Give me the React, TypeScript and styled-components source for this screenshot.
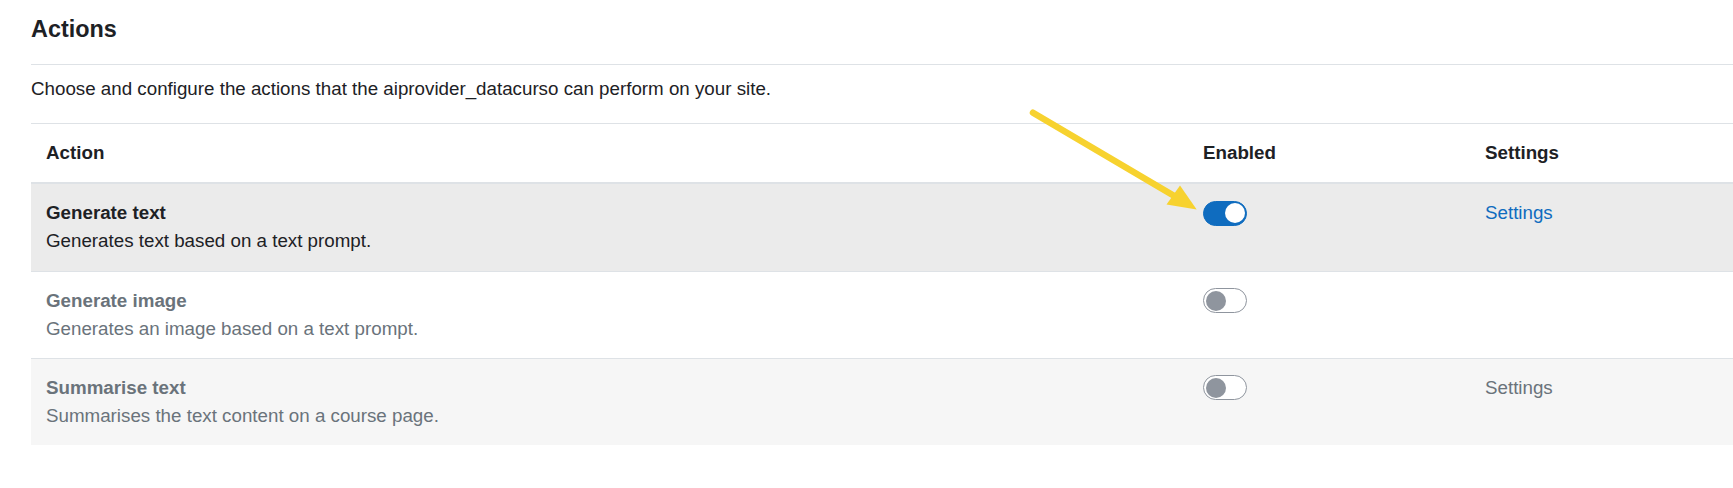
import React from "react";
import styled, { createGlobalStyle } from "styled-components";

const GlobalStyle = createGlobalStyle`
  html, body {
    margin: 0;
    padding: 0;
    background: #ffffff;
  }
  body {
    font-family: "Liberation Sans", Arial, sans-serif;
    font-size: 18.75px;
    line-height: 28.125px;
    color: #1d2125;
    overflow: hidden;
  }
`;

const Page = styled.div`
  position: relative;
  width: 1733px;
  height: 488px;
  padding-left: 31px;
  box-sizing: border-box;
  overflow: hidden;
`;

const Title = styled.h4`
  margin: 0;
  padding: 15px 0 21px;
  font-size: 23.4px;
  line-height: 28px;
  font-weight: 700;
  color: #1d2125;
  border-bottom: 1px solid #dee2e6;
`;

const Description = styled.p`
  margin: 0 0 20px;
  padding-top: 10px;
  line-height: 28.125px;
`;

const Table = styled.table`
  width: 1702px;
  border-collapse: collapse;
  table-layout: fixed;
`;

const HeadCell = styled.th<{ $width?: number }>`
  box-sizing: border-box;
  width: ${(p) => (p.$width ? `${p.$width}px` : "auto")};
  padding: 15px;
  text-align: left;
  font-weight: 700;
  line-height: 28.125px;
  vertical-align: top;
  border-top: 1px solid #dee2e6;
  border-bottom: 2px solid #dee2e6;
`;

const Row = styled.tr<{ $bg: string }>`
  background: ${(p) => p.$bg};
`;

const Cell = styled.td<{ $muted?: boolean }>`
  padding: 15px;
  vertical-align: top;
  line-height: 28.125px;
  border-top: 1px solid #dee2e6;
  color: ${(p) => (p.$muted ? "#6a737b" : "#1d2125")};
`;

const ActionName = styled.div`
  font-weight: 700;
`;

const ActionDesc = styled.div`
  font-weight: 400;
`;

const SwitchLine = styled.div`
  height: 28.125px;
  display: flex;
  align-items: center;
`;

const Switch = styled.span<{ $on: boolean }>`
  box-sizing: border-box;
  display: inline-flex;
  align-items: center;
  justify-content: ${(p) => (p.$on ? "flex-end" : "flex-start")};
  width: 44px;
  height: 25px;
  padding: 0 1.5px;
  border-radius: 13px;
  border: 1px solid ${(p) => (p.$on ? "#0f6cbf" : "#8f959e")};
  background: ${(p) => (p.$on ? "#0f6cbf" : "#ffffff")};
`;

const Knob = styled.span<{ $on: boolean }>`
  width: 20px;
  height: 20px;
  border-radius: 50%;
  background: ${(p) => (p.$on ? "#ffffff" : "#8f959e")};
`;

const SettingsLink = styled.a<{ $muted?: boolean }>`
  color: ${(p) => (p.$muted ? "#6a737b" : "#0f6cbf")};
  text-decoration: none;
`;

const Annotation = styled.svg`
  position: absolute;
  left: 0;
  top: 0;
  pointer-events: none;
`;

type Action = {
  name: string;
  desc: string;
  enabled: boolean;
  settings: boolean;
  bg: string;
};

const actions: Action[] = [
  {
    name: "Generate text",
    desc: "Generates text based on a text prompt.",
    enabled: true,
    settings: true,
    bg: "#ebebeb",
  },
  {
    name: "Generate image",
    desc: "Generates an image based on a text prompt.",
    enabled: false,
    settings: false,
    bg: "#ffffff",
  },
  {
    name: "Summarise text",
    desc: "Summarises the text content on a course page.",
    enabled: false,
    settings: true,
    bg: "#f6f6f6",
  },
];

export default function App() {
  return (
    <>
      <GlobalStyle />
      <Page>
        <Title>Actions</Title>
        <Description>
          Choose and configure the actions that the aiprovider_datacurso can perform on your site.
        </Description>
        <Table>
          <thead>
            <tr>
              <HeadCell $width={1157}>Action</HeadCell>
              <HeadCell $width={282}>Enabled</HeadCell>
              <HeadCell>Settings</HeadCell>
            </tr>
          </thead>
          <tbody>
            {actions.map((a) => (
              <Row key={a.name} $bg={a.bg}>
                <Cell $muted={!a.enabled}>
                  <ActionName>{a.name}</ActionName>
                  <ActionDesc>{a.desc}</ActionDesc>
                </Cell>
                <Cell>
                  <SwitchLine>
                    <Switch $on={a.enabled} role="switch" aria-checked={a.enabled}>
                      <Knob $on={a.enabled} />
                    </Switch>
                  </SwitchLine>
                </Cell>
                <Cell $muted={!a.enabled}>
                  {a.settings && <SettingsLink href="#" $muted={!a.enabled}>Settings</SettingsLink>}
                </Cell>
              </Row>
            ))}
          </tbody>
        </Table>
        <Annotation width="1733" height="488" viewBox="0 0 1733 488">
          <line
            x1="1033"
            y1="112.7"
            x2="1176"
            y2="197"
            stroke="#f7d22f"
            strokeWidth="6.5"
            strokeLinecap="round"
          />
          <polygon points="1196.7,209.5 1180,185.5 1166.5,204.5" fill="#f7d22f" />
        </Annotation>
      </Page>
    </>
  );
}
